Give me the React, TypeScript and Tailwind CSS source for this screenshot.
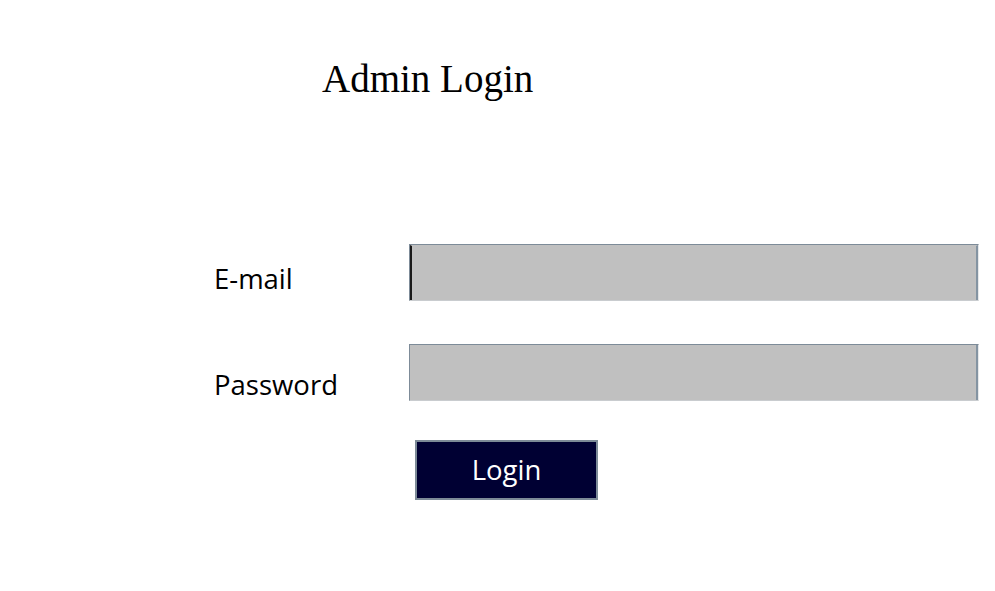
export default function App() {
    return (
        <div className="w-[995px] h-[591px] bg-white relative overflow-hidden">
            {/* Title */}
            <div className="pt-[57px] pl-[322px]">
                <h1 className="text-[39px] leading-[44px] text-black" style={{ fontFamily: '"Liberation Serif", serif' }}>
                    Admin Login
                </h1>
            </div>

            {/* Form */}
            <div className="mt-[143px] pl-[214px] flex flex-col" style={{ fontFamily: '"Open Sans", sans-serif' }}>
                <div className="flex items-start h-[57px]">
                    <label className="w-[195px] pt-[16px] text-[27.5px] leading-[38px] text-black">E-mail</label>
                    <div className="w-[570px] h-[57px] border border-[#7d8b98] border-b-[#c9cccf] border-r-[#e6e8ea] flex">
                        <div className="flex-1 bg-[#c0c0c0] border-l-2 border-l-[#1a1a1a] border-r-2 border-r-[#8494a2] border-t border-t-[#c0c0c0]" />
                    </div>
                </div>

                <div className="flex items-start h-[57px] mt-[43px]">
                    <label className="w-[195px] pt-[22px] text-[27.5px] leading-[38px] text-black">Password</label>
                    <div className="w-[570px] h-[57px] border border-[#7d8b98] border-b-[#c9cccf] border-r-[#e6e8ea] flex">
                        <div className="flex-1 bg-[#c0c0c0] border-r-2 border-r-[#8494a2]" />
                    </div>
                </div>

                <div className="pl-[201px] mt-[39px]">
                    <button className="w-[183px] h-[60px] bg-[#000033] border-2 border-[#7d8b98] text-white text-[27.5px] leading-[38px]">
                        Login
                    </button>
                </div>
            </div>
        </div>
    );
}
